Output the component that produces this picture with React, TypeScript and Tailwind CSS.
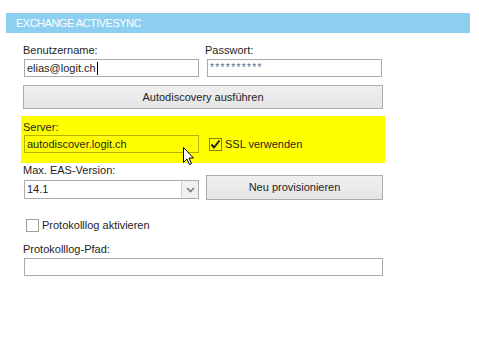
import React from "react";

const font = { fontFamily: '"Liberation Sans", Arial, sans-serif' };

export default function App() {
  return (
    <div className="w-[479px] h-[352px] bg-white relative text-[11px] text-[#1e1e1e] leading-none" style={font}>
      <div className="pt-[13px] pl-[6px] pr-[9px]">
        <div className="h-[20px] bg-[#8ccff0] text-white pl-[10px] flex items-center text-[11px] tracking-[-0.5px]">
          EXCHANGE ACTIVESYNC
        </div>
      </div>
      <div className="pl-[23px] w-[384px]">
        <div className="flex gap-[7px] mt-[12px]">
          <div className="flex flex-col">
            <span className="h-[14px]">Benutzername:</span>
            <div className="ml-[1px] w-[175px] h-[18px] border border-[#ababab] flex items-center pl-[2px]">
              elias@logit.ch<span className="w-px h-[13px] bg-black ml-px" />
            </div>
          </div>
          <div className="flex flex-col">
            <span className="h-[14px] -ml-[1px]">Passwort:</span>
            <div className="ml-[1px] w-[175px] h-[18px] border border-[#ababab] flex items-center pl-[2px] text-[#4d6a88] text-[10px] tracking-[1.4px]">
              **********
            </div>
          </div>
        </div>
        <div className="mt-[8px] w-[360px] h-[24px] border border-[#acacac] bg-gradient-to-b from-[#f0f0f0] to-[#e5e5e5] flex items-center justify-center">
          Autodiscovery ausführen
        </div>
        <div className="mt-[7px] -ml-[2px] w-[364px] h-[47px] bg-[#ffff00] pl-[2px] pt-[6px] flex flex-col">
          <span className="h-[13px]">Server:</span>
          <div className="flex items-center">
            <div className="ml-[1px] w-[175px] h-[18px] border border-[#b4b400] flex items-center pl-[2px]">
              autodiscover.logit.ch
            </div>
            <div className="ml-[10px] w-[13px] h-[13px] border border-[#8a8a00] flex items-center justify-center">
              <svg width="11" height="11" viewBox="0 0 11 11">
                <path d="M1.5 5.5 L4 8.5 L9.5 1.5" stroke="#222" strokeWidth="2" fill="none" />
              </svg>
            </div>
            <span className="ml-[3px]">SSL verwenden</span>
          </div>
        </div>
        <div className="flex gap-[7px] mt-[2px] items-end">
          <div className="flex flex-col">
            <span className="h-[15px]">Max. EAS-Version:</span>
            <div className="ml-[1px] w-[175px] h-[19px] border border-[#ababab] flex">
              <div className="flex-1 flex items-center pl-[2px]">14.1</div>
              <div className="w-[17px] bg-[#f0f0f0] border-l border-[#d4d4d4] flex items-center justify-center">
                <svg width="9" height="6" viewBox="0 0 9 6">
                  <path d="M1 1 L4.5 4.5 L8 1" stroke="#7a7a7a" strokeWidth="1.6" fill="none" />
                </svg>
              </div>
            </div>
          </div>
          <div className="w-[177px] h-[25px] mb-[-1px] border border-[#acacac] bg-gradient-to-b from-[#f0f0f0] to-[#e5e5e5] flex items-center justify-center">
            Neu provisionieren
          </div>
        </div>
        <div className="flex items-center mt-[20px] ml-[3px]">
          <div className="w-[13px] h-[13px] border border-[#a0a0a0] bg-white" />
          <span className="ml-[3px]">Protokolllog aktivieren</span>
        </div>
        <span className="block mt-[12px] h-[14px]">Protokolllog-Pfad:</span>
        <div className="ml-[1px] w-[359px] h-[18px] border border-[#ababab]" />
      </div>
      <svg className="absolute left-[183px] top-[147px]" width="12" height="19" viewBox="0 0 12 19">
        <path d="M0.5 0.5 L0.5 15.5 L4 12 L6.5 17.5 L8.5 16.5 L6 11 L10.5 11 Z" fill="#fff" stroke="#000" strokeWidth="1" />
      </svg>
    </div>
  );
}
